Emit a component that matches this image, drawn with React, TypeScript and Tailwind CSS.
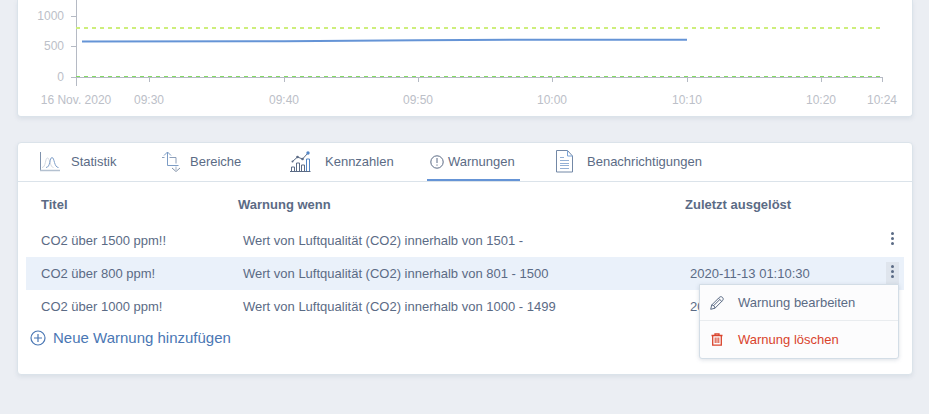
import React, { useState } from 'react'

const yTicks = [
    { label: '1000', y: 16 },
    { label: '500', y: 46 },
    { label: '0', y: 77 },
]

const xTicks = [
    { label: '16 Nov. 2020', x: 76 },
    { label: '09:30', x: 149 },
    { label: '09:40', x: 284 },
    { label: '09:50', x: 418 },
    { label: '10:00', x: 552 },
    { label: '10:10', x: 687 },
    { label: '10:20', x: 821 },
    { label: '10:24', x: 882 },
]

const warnings = [
    { id: 1, title: 'CO2 über 1500 ppm!!', rule: 'Wert von Luftqualität (CO2) innerhalb von 1501 -', last: '' },
    { id: 2, title: 'CO2 über 800 ppm!', rule: 'Wert von Luftqualität (CO2) innerhalb von 801 - 1500', last: '2020-11-13 01:10:30' },
    { id: 3, title: 'CO2 über 1000 ppm!', rule: 'Wert von Luftqualität (CO2) innerhalb von 1000 - 1499', last: '2020-11-13 01:10:30' },
]

const StatisticIcon = () => (
    <svg width="22" height="20" viewBox="0 0 22 20" fill="none">
        <path d="M1.5 0v18" stroke="#7f92ad" />
        <path d="M1 18.5h20" stroke="#b4c1d0" strokeWidth="1.500" />
        <path d="M3 15.500c4 0 3-9.500 5.500-9.500s2.500 9.500 6 9.500" stroke="#d3d9e2" />
        <path d="M7 15.500c4.500 0 3.500-10 6-10s2 10 6.500 10" stroke="#7f9fc9" />
    </svg>
)

const RangeIcon = () => (
    <svg width="19" height="22" viewBox="0 0 19 22" fill="none" stroke="#7c9cc5">
        <path d="M6.500 1v13.500h11" />
        <path d="M3 4.500l3.500-3.500 3.500 3.500" />
        <path d="M1 6.500h2.500M8.500 6.500h6.500v6" stroke="#8c9fba" />
        <path d="M15 15.500v3.500" stroke="#a3b3c8" />
        <path d="M11 17l4 3.500 4-3.500" stroke="#8493a9" />
    </svg>
)

const FiguresIcon = () => (
    <svg width="21" height="22" viewBox="0 0 21 22" fill="none" stroke="#5b6b85">
        <path d="M0 20.500h20.500" />
        <path d="M1.500 20v-4h3v4M6.500 20v-8h3v8M11.500 20v-6h3v6" />
        <path d="M16.500 20v-12h3v12" stroke="#5386c6" />
        <path d="M2.500 10.500l5-4.500 5 2 5.500-6" />
        <circle cx="2.500" cy="10.500" r="1" fill="#5b6b85" stroke="none" />
        <circle cx="7.500" cy="6" r="1.300" fill="#5b6b85" stroke="none" />
        <circle cx="12.500" cy="8" r="1.300" fill="#5b6b85" stroke="none" />
        <circle cx="18" cy="2" r="1.700" fill="#5386c6" stroke="none" />
    </svg>
)

const AlertIcon = () => (
    <svg width="14" height="14" viewBox="0 0 14 14" fill="none" stroke="#5b6b85">
        <circle cx="7" cy="7" r="6.200" />
        <path d="M7 3v5M7 9.500v1.200" />
    </svg>
)

const DocumentIcon = () => (
    <svg width="18" height="23" viewBox="0 0 18 23" fill="none" stroke="#7388a6">
        <path d="M11.500 .500h-11v21.500h16v-16z" />
        <path d="M11.500 .500v5.500h5" stroke="#7ba4d8" />
        <path d="M4 7.500h4M4 10.500h9M4 13.500h9M4 15.500h9M4 18.500h9" stroke="#93b0d5" />
    </svg>
)

const PlusIcon = () => (
    <svg width="16" height="16" viewBox="0 0 16 16" fill="none" stroke="#4a77b4" strokeWidth="1.200">
        <circle cx="8" cy="8" r="7" />
        <path d="M8 4v8M4 8h8" />
    </svg>
)

const PencilIcon = () => (
    <svg width="14" height="14" viewBox="0 0 14 14" fill="none" stroke="#5b6b85" strokeLinejoin="round">
        <path d="M.700 13.300l1-4.300 7.600-7.600c1-1 2.300-.900 3.200 0s1 2.200 0 3.200l-7.500 7.600z" />
        <path d="M1.700 9c1.800 0 3.200 1.400 3.300 3.200M8.500 2.200l3.200 3.200M3.500 9.800l6-6" />
    </svg>
)

const TrashIcon = () => (
    <svg width="12" height="13" viewBox="0 0 12 13" fill="none" stroke="#d9432c" strokeWidth="1.300">
        <path d="M.500 2.500h11M4 2.500v-1.700h4v1.700" />
        <path d="M1.700 2.500v9.700h8.600v-9.700" />
        <path d="M4.200 4.500v5.500M6 4.500v5.500M7.800 4.500v5.500" strokeWidth="1" />
    </svg>
)

const tabs = [
    { name: 'Statistik', icon: <StatisticIcon />, width: 'w-[122px]', iconWidth: 'w-8' },
    { name: 'Bereiche', icon: <RangeIcon />, width: 'w-[129px]', iconWidth: 'w-[29px]' },
    { name: 'Kennzahlen', icon: <FiguresIcon />, width: 'w-[137px]', iconWidth: 'w-[35px]' },
    { name: 'Warnungen', icon: <AlertIcon />, width: 'w-[93px] px-[3px] mr-9', iconWidth: 'w-[18px]' },
    { name: 'Benachrichtigungen', icon: <DocumentIcon />, width: '', iconWidth: 'w-[31px]' },
]

const Chart = () => (
    <svg viewBox="18 0 894 116" className="block w-full text-[12px]" fill="#bcc0c8" role="img" aria-label="Luftqualität (CO2)">
        <g stroke="#b5bac4" fill="none">
            <path d="M76.500 0v86M71 77.500h811.500" />
            {yTicks.map((tick) => (
                <path key={tick.label} d={`M71 ${tick.y + 0.5}h5`} />
            ))}
            {xTicks.slice(1).map((tick) => (
                <path key={tick.label} d={`M${tick.x + 0.5} 77v5`} />
            ))}
        </g>
        <path d="M76 28h805" stroke="#cdee7b" strokeWidth="2" strokeDasharray="4 4" />
        <path d="M76 76.500h805" stroke="#83da62" strokeWidth="1" strokeDasharray="4 4" />
        <path d="M82 41.500L284 41.300L418 40.200L552 39.700H687" stroke="#6594d6" strokeWidth="2" fill="none" />
        {yTicks.map((tick) => (
            <text key={tick.label} x="64" y={tick.y + 4} textAnchor="end">{tick.label}</text>
        ))}
        {xTicks.map((tick) => (
            <text key={tick.label} x={tick.x} y="104" textAnchor="middle">{tick.label}</text>
        ))}
    </svg>
)

const ActionMenu = () => (
    <div className="absolute right-0 top-full z-10 w-[200px] rounded-b-[3px] border border-[#d3dde6] bg-[#fcfcfd] shadow-[0_1px_4px_rgba(80,100,130,0.2)]">
        <button className="flex h-9 w-full items-center border-b border-[#e9ecef] pl-2.5 text-left">
            <span className="w-7"><PencilIcon /></span>
            Warnung bearbeiten
        </button>
        <button className="flex h-[37px] w-full items-center pl-2.5 text-left text-[#d9432c]">
            <span className="w-7 pl-px"><TrashIcon /></span>
            Warnung löschen
        </button>
    </div>
)

const App = () => {
    const [activeTab, setActiveTab] = useState('Warnungen')
    const [openMenu, setOpenMenu] = useState<number | null>(2)

    return (
        <main className="min-h-screen bg-[#ebeef3] pb-9 pl-[17px] pr-4 font-['Liberation_Sans',Arial,sans-serif] text-[13px] text-[#5b6b85]">
            <section className="rounded-b border border-t-0 border-[#dbe3ea] bg-white shadow-[0_2px_4px_rgba(100,120,150,0.12)]">
                <Chart />
            </section>

            <section className="mt-[25px] rounded border border-[#dbe3ea] bg-white pb-[25px] shadow-[0_2px_4px_rgba(100,120,150,0.12)]">
                <nav className="flex h-[39px] border-b border-[#dbe3ea] pl-[21px]">
                    {tabs.map((tab) => (
                        <button
                            key={tab.name}
                            onClick={() => setActiveTab(tab.name)}
                            className={`flex shrink-0 items-center border-b-2 pt-px text-left ${tab.width} ${activeTab === tab.name ? 'border-[#6594d6]' : 'border-transparent'}`}
                        >
                            <span className={`shrink-0 ${tab.iconWidth}`}>{tab.icon}</span>
                            {tab.name}
                        </button>
                    ))}
                </nav>

                <div className="px-2">
                    <table className="w-full table-fixed text-left">
                        <colgroup>
                            <col className="w-[212px]" />
                            <col />
                            <col className="w-[186px]" />
                            <col className="w-[33px]" />
                        </colgroup>
                        <thead>
                            <tr className="h-[42px]">
                                <th className="pl-[15px] pt-1">Titel</th>
                                <th className="pt-1">Warnung wenn</th>
                                <th className="pt-1">Zuletzt ausgelöst</th>
                                <th aria-label="Aktionen"></th>
                            </tr>
                        </thead>
                        <tbody>
                            {warnings.map((warning) => (
                                <tr key={warning.id} className={`h-[33px] ${openMenu === warning.id ? 'bg-[#eaf1fa]' : ''}`}>
                                    <td className="pl-[15px]">{warning.title}</td>
                                    <td className="pl-[5px]">{warning.rule}</td>
                                    <td className="pl-[5px]">{warning.last}</td>
                                    <td className="pr-[5px] align-bottom">
                                        {(warning.last === '' || openMenu === warning.id) && (
                                            <div className="relative mb-1.5 flex justify-end">
                                                <button
                                                    aria-label="Aktionen"
                                                    onClick={() => setOpenMenu(openMenu === warning.id ? null : warning.id)}
                                                    className={`flex h-[22px] w-[13px] flex-col items-center gap-0.5 pt-[3px] ${openMenu === warning.id ? 'bg-[#dfe5ed]' : ''}`}
                                                >
                                                    <span className="size-[3px] rounded-full bg-[#5b6b85]"></span>
                                                    <span className="size-[3px] rounded-full bg-[#5b6b85]"></span>
                                                    <span className="size-[3px] rounded-full bg-[#5b6b85]"></span>
                                                </button>
                                                {openMenu === warning.id && <ActionMenu />}
                                            </div>
                                        )}
                                    </td>
                                </tr>
                            ))}
                        </tbody>
                    </table>
                    <button className="flex items-center gap-[7px] pl-1 pt-1 text-[15px] leading-[22px] text-[#4a77b4]">
                        <PlusIcon />
                        Neue Warnung hinzufügen
                    </button>
                </div>
            </section>
        </main>
    )
}

export default App
